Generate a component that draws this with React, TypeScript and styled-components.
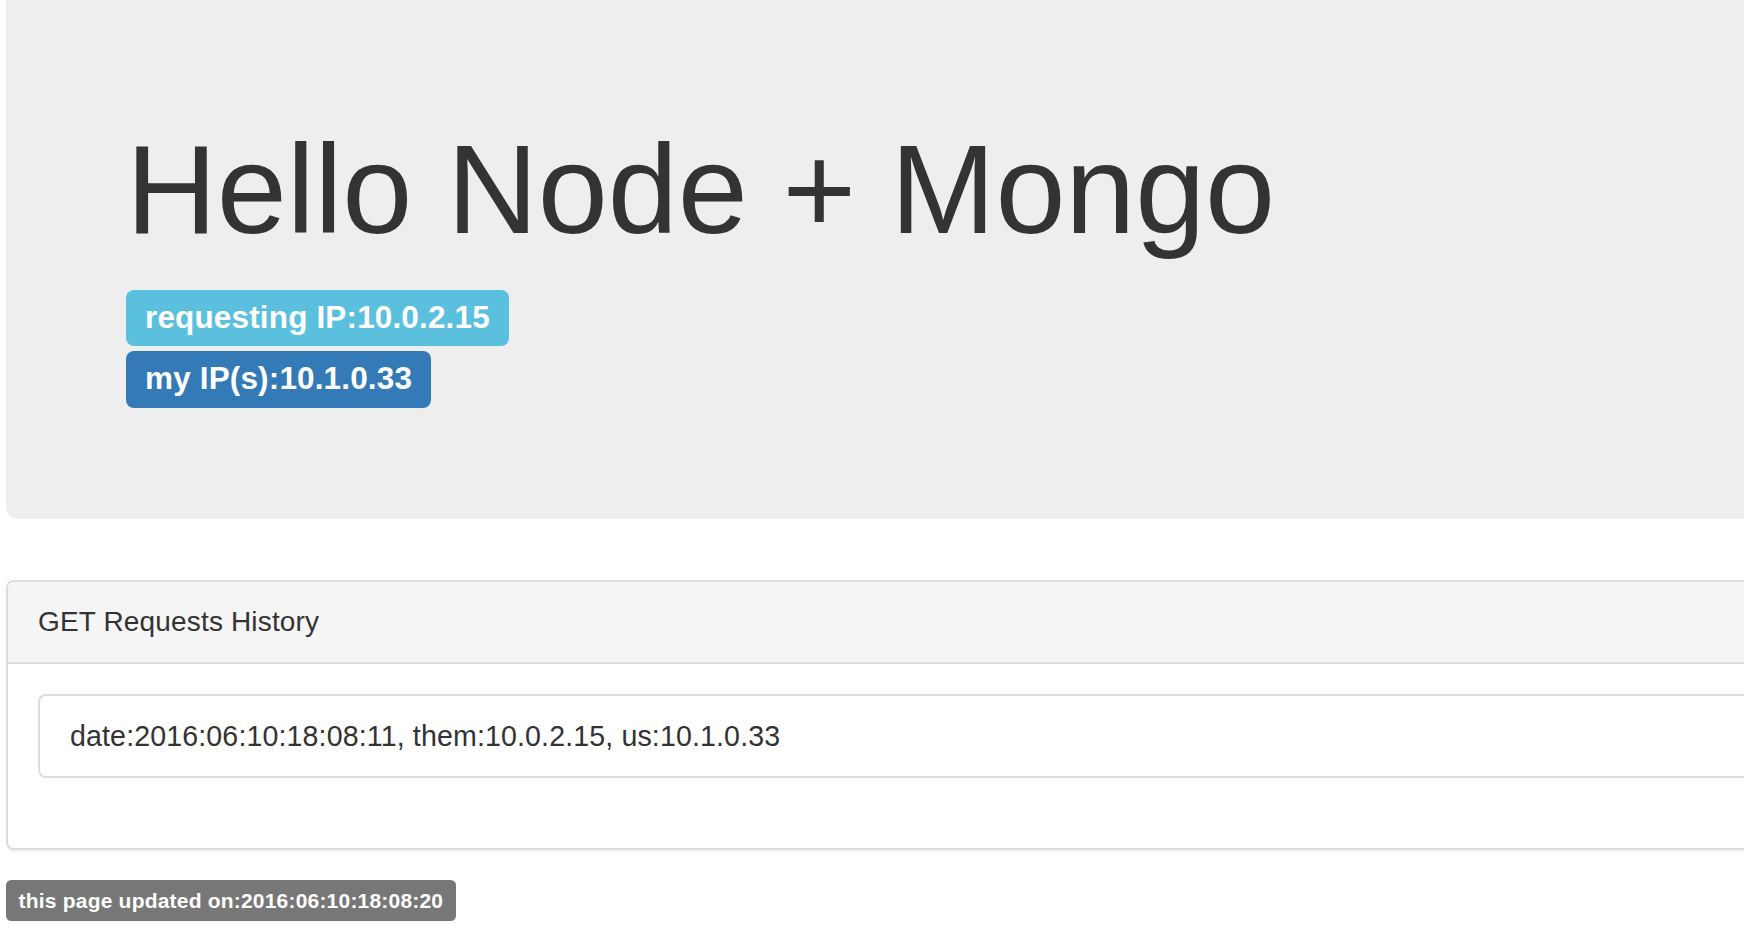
import React from "react";
import styled, { createGlobalStyle } from "styled-components";

const GlobalStyle = createGlobalStyle`
  html, body {
    margin: 0;
    padding: 0;
    overflow: hidden;
    background: #fff;
  }
  body {
    font-family: "Liberation Sans", Arial, Helvetica, sans-serif;
    color: #333;
  }
  * { box-sizing: border-box; }
`;

const Page = styled.div`
  width: 1800px;
  padding-left: 6px;
  display: flex;
  flex-direction: column;
`;

const Jumbotron = styled.section`
  background: #eee;
  border-radius: 0 0 12px 12px;
  padding: 121px 120px 111px;
  display: flex;
  flex-direction: column;
  align-items: flex-start;
`;

const Title = styled.h1`
  margin: 0 0 30px;
  font-size: 126px;
  line-height: 1.1;
  font-weight: 400;
  letter-spacing: -0.18px;
  color: #333;
`;

const BadgeStack = styled.div`
  display: flex;
  flex-direction: column;
  align-items: flex-start;
  gap: 5px;
`;

const Badge = styled.span<{ $bg: string; $small?: boolean }>`
  display: inline-block;
  background: ${(p) => p.$bg};
  color: #fff;
  font-weight: 700;
  white-space: nowrap;
  line-height: 1;
  font-size: ${(p) => (p.$small ? "21px" : "31.5px")};
  letter-spacing: ${(p) => (p.$small ? "0.2px" : "0.15px")};
  padding: ${(p) => (p.$small ? "10px 12.6px 10px" : "12px 19px 13px")};
  border-radius: ${(p) => (p.$small ? "5.25px" : "8px")};
`;

const Panel = styled.section`
  margin-top: 61px;
  border: 2px solid #ddd;
  border-right: none;
  border-radius: 8px 0 0 8px;
  background: #fff;
  box-shadow: 0 2px 2px rgba(0, 0, 0, 0.05);
`;

const PanelHeading = styled.header`
  background: #f5f5f5;
  border-bottom: 2px solid #ddd;
  border-radius: 6px 0 0 0;
  padding: 20px 30px;
  font-size: 28px;
  line-height: 40px;
  letter-spacing: 0.16px;
  color: #333;
`;

const PanelBody = styled.div`
  padding: 30px 0 30px 30px;
`;

const ListGroup = styled.ul`
  margin: 0 0 40px;
  padding: 0;
  list-style: none;
`;

const ListItem = styled.li`
  border: 2px solid #ddd;
  border-right: none;
  border-radius: 8px 0 0 8px;
  padding: 20px 30px;
  font-size: 28.6px;
  line-height: 40px;
  letter-spacing: 0.12px;
  color: #333;
`;

const Footer = styled.div`
  margin-top: 30px;
  display: flex;
`;

export default function App() {
  return (
    <>
      <GlobalStyle />
      <Page>
        <Jumbotron>
          <Title>Hello Node + Mongo</Title>
          <BadgeStack>
            <Badge $bg="#5bc0de">requesting IP:10.0.2.15</Badge>
            <Badge $bg="#337ab7">my IP(s):10.1.0.33</Badge>
          </BadgeStack>
        </Jumbotron>
        <Panel>
          <PanelHeading>GET Requests History</PanelHeading>
          <PanelBody>
            <ListGroup>
              <ListItem>date:2016:06:10:18:08:11, them:10.0.2.15, us:10.1.0.33</ListItem>
            </ListGroup>
          </PanelBody>
        </Panel>
        <Footer>
          <Badge $bg="#777" $small>
            this page updated on:2016:06:10:18:08:20
          </Badge>
        </Footer>
      </Page>
    </>
  );
}
